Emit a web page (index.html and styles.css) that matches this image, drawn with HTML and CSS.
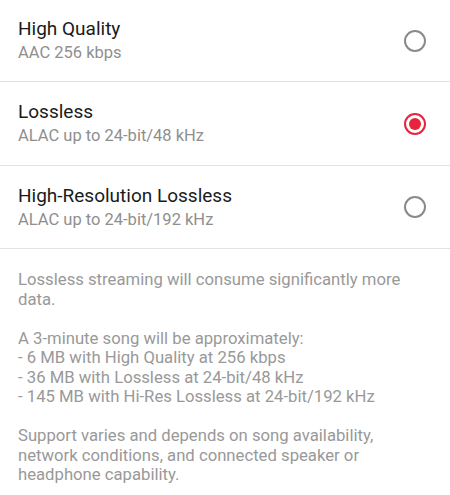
FILE: index.html
```html
<!DOCTYPE html>
<html lang="en">
<head>
<meta charset="utf-8">
<link rel="stylesheet" href="styles.css">
</head>
<body>
<div class="page">
  <div class="option first">
    <div class="texts">
      <div class="title">High Quality</div>
      <div class="sub">AAC 256 kbps</div>
    </div>
    <span class="radio"></span>
  </div>
  <div class="option second">
    <div class="texts">
      <div class="title">Lossless</div>
      <div class="sub">ALAC up to 24-bit/48 kHz</div>
    </div>
    <span class="radio checked"></span>
  </div>
  <div class="option">
    <div class="texts">
      <div class="title">High-Resolution Lossless</div>
      <div class="sub">ALAC up to 24-bit/192 kHz</div>
    </div>
    <span class="radio"></span>
  </div>
  <p class="note">Lossless streaming will consume significantly more data.

A 3-minute song will be approximately:
- 6 MB with High Quality at 256 kbps
- 36 MB with Lossless at 24-bit/48 kHz
- 145 MB with Hi-Res Lossless at 24-bit/192 kHz

Support varies and depends on song availability, network conditions, and connected speaker or headphone capability.</p>
</div>
</body>
</html>
```
FILE: styles.css
```css
html, body {
  margin: 0;
  padding: 0;
  background: #ffffff;
}
body {
  font-family: Roboto, "Noto Sans", sans-serif;
}
.page {
  width: 450px;
}
.option {
  display: flex;
  align-items: center;
  justify-content: space-between;
  height: 83px;
  padding: 0 24px 0 18px;
  border-bottom: 1px solid #e3e3e3;
  box-sizing: border-box;
}
.option.first {
  height: 82px;
}
.option.second {
  height: 84px;
}
.texts {
  display: flex;
  flex-direction: column;
}
.title {
  font-size: 19px;
  line-height: 24px;
  color: #1a1a1a;
}
.sub {
  font-size: 16.5px;
  line-height: 23px;
  color: #8f8f8f;
}
.radio {
  width: 22px;
  height: 22px;
  border: 2px solid #8a8a8a;
  border-radius: 50%;
  box-sizing: border-box;
  position: relative;
}
.radio.checked {
  border-color: #e8233c;
}
.radio.checked::after {
  content: "";
  position: absolute;
  left: 3px;
  top: 3px;
  width: 12px;
  height: 12px;
  border-radius: 50%;
  background: #e8233c;
}
.note {
  margin: 0;
  padding: 21px 18px 0 18px;
  white-space: pre-line;
  font-size: 16.7px;
  line-height: 19.5px;
  color: #999999;
  width: 410px;
}
```
